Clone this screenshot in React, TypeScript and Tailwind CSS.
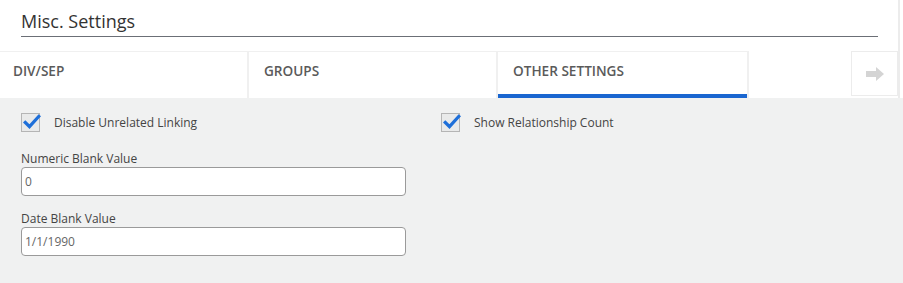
import React from "react";

function Check() {
  return (
    <div className="w-[19px] h-[19px] border border-[#b5b5b5] bg-[#e9eaea] relative shrink-0">
      <svg viewBox="0 0 20 20" className="absolute left-[1px] top-[-1px] w-[18px] h-[18px]">
        <path d="M2.5 10.5 L7.2 15.2 L17.5 3.8" fill="none" stroke="#1e6fd9" strokeWidth="3.6" strokeLinecap="square" strokeLinejoin="miter" />
      </svg>
    </div>
  );
}

export default function App() {
  return (
    <div
      className="w-[903px] h-[283px] bg-white flex flex-col overflow-hidden"
      style={{ fontFamily: '"Open Sans", "Noto Sans", sans-serif' }}
    >
      <div className="flex flex-col w-[900px] border-r-2 border-[#ececec]">
        <div className="pt-[9px] pl-[21px] pr-[20px]">
          <div className="h-[28px] border-b border-[#6b6f76] text-[18px] leading-[24px] text-[#333]">
            Misc. Settings
          </div>
        </div>
        <div className="h-[14px]" />
        <div className="flex h-[47px]">
          <div className="w-[249px] border-t border-r-2 border-[#f0f0f0] pl-[13px] pt-[9px] text-[13.6px] font-semibold text-[#5a5a5a]">
            DIV/SEP
          </div>
          <div className="w-[249px] border-t border-r-2 border-[#f0f0f0] pl-[15px] pt-[9px] text-[13.6px] font-semibold text-[#5a5a5a]">
            GROUPS
          </div>
          <div className="w-[251px] border-t border-r-2 border-[#f0f0f0] pl-[15px] pt-[9px] text-[13.6px] font-semibold text-[#5a5a5a] relative">
            OTHER SETTINGS
            <div className="absolute left-0 right-0 bottom-0 h-[4px] bg-[#1a66d0]" />
          </div>
          <div className="flex-1" />
          <div className="w-[47px] h-[45px] border border-[#ececec] flex items-center justify-center">
            <svg viewBox="0 0 18 14" className="w-[18px] h-[14px]">
              <path d="M0 4 H10 V0 L18 7 L10 14 V10 H0 Z" fill="#d4d4d4" />
            </svg>
          </div>
        </div>
      </div>
      <div className="flex-1 bg-[#f0f1f1] pl-[21px] pt-[15px] grid grid-cols-[420px_1fr] text-[12px] text-[#444]">
        <div className="flex flex-col">
          <div className="flex items-center h-[19px]">
            <Check />
            <span className="ml-[14px]">Disable Unrelated Linking</span>
          </div>
          <div className="mt-[19px] leading-[16px]">Numeric Blank Value</div>
          <div className="w-[385px] h-[29px] bg-white border border-[#9a9a9a] rounded-[4px] flex items-center pl-[3px] text-[#666]">
            0
          </div>
          <div className="mt-[15px] leading-[16px]">Date Blank Value</div>
          <div className="w-[385px] h-[29px] bg-white border border-[#9a9a9a] rounded-[4px] flex items-center pl-[3px] text-[#666]">
            1/1/1990
          </div>
        </div>
        <div className="flex flex-col">
          <div className="flex items-center h-[19px]">
            <Check />
            <span className="ml-[14px]">Show Relationship Count</span>
          </div>
        </div>
      </div>
    </div>
  );
}
